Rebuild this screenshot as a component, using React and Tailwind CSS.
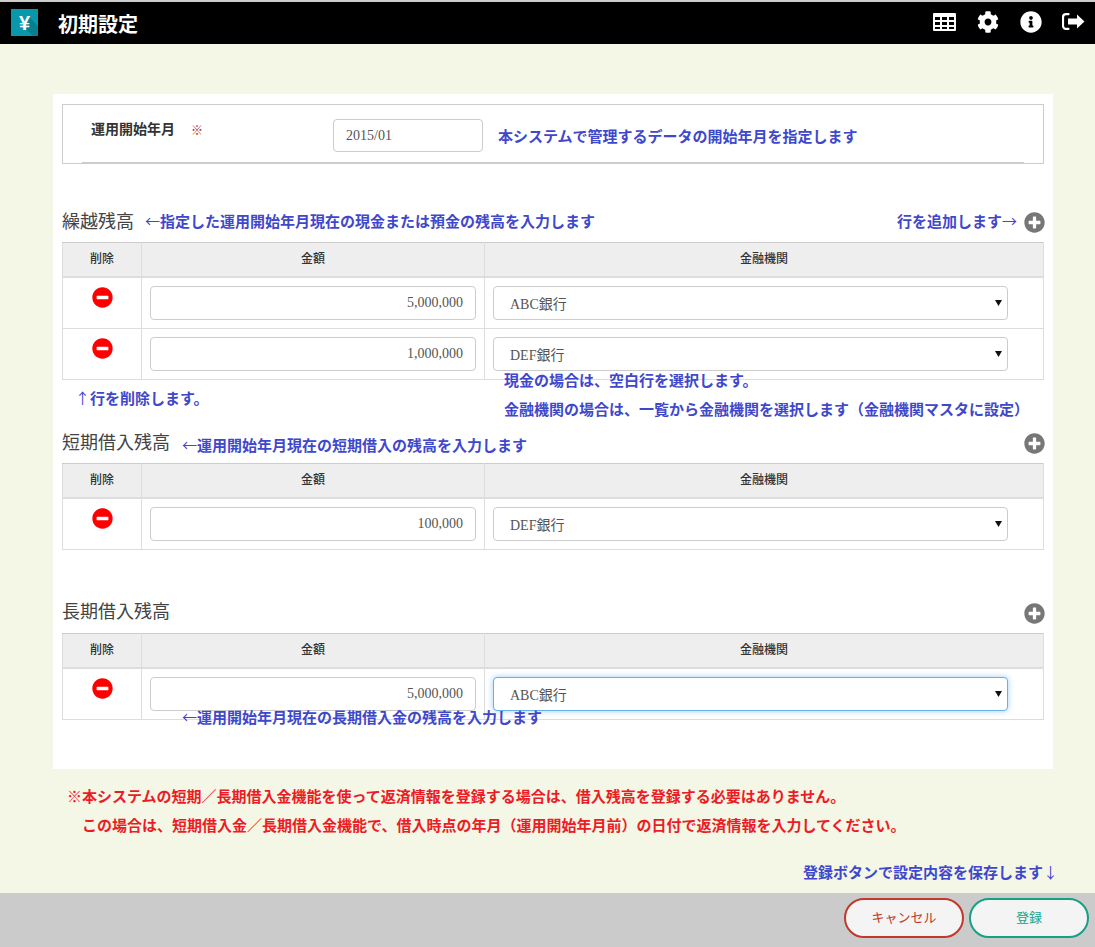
import React from "react";
import { FaCog, FaInfoCircle, FaMinusCircle, FaPlusCircle } from "react-icons/fa";

const Note = ({ className = "", children }) => (
  <span className={`text-[15px] leading-[20px] font-bold text-[#3f48cc] whitespace-nowrap font-['Noto_Sans_CJK_JP',sans-serif] ${className}`}>{children}</span>
);

const Arrow = ({ children }) => <span className="font-normal">{children}</span>;

const Row = ({ amount, bank, focus }) => (
  <tr className="h-[51px] first:h-[52px]">
    <td className="border border-[#dddddd] align-top pt-[9px]">
      <FaMinusCircle className="block mx-auto text-[#ff0000] text-[21px]" />
    </td>
    <td className="border border-[#dddddd] align-top pt-[8px] px-2">
      <input
        readOnly
        value={amount}
        className="w-full h-[34px] border border-[#cccccc] rounded-[4px] bg-white text-right pr-3 text-[14px] text-[#555555] font-['Liberation_Serif','Noto_Sans_CJK_JP',serif] outline-none"
      />
    </td>
    <td className="border border-[#dddddd] align-top pt-[8px] pl-2">
      <div className="relative w-[515px]">
        <select
          defaultValue={bank}
          className={`appearance-none w-full h-[34px] rounded-[4px] bg-white pl-4 pt-[3px] text-[14px] text-[#555555] font-['Liberation_Serif','Noto_Sans_CJK_JP',serif] outline-none border ${
            focus ? "border-[#66afe9] shadow-[0_0_6px_rgba(102,175,233,0.6)]" : "border-[#cccccc]"
          }`}
        >
          <option>{bank}</option>
        </select>
        <svg viewBox="0 0 8 8" className="absolute right-[6px] top-[13px] w-[7px] h-[7px]">
          <path d="M0 1h8L4 8z" fill="#111" />
        </svg>
      </div>
    </td>
  </tr>
);

const BalanceTable = ({ rows }) => (
  <table className="w-[981px] table-fixed border-collapse">
    <colgroup>
      <col className="w-[79px]" />
      <col className="w-[343px]" />
      <col className="w-[559px]" />
    </colgroup>
    <thead>
      <tr className="h-[34px] bg-[#eeeeee] text-[12px] font-medium text-[#333333]">
        <th className="border border-[#dddddd] border-t-[#cccccc] border-b-2 font-medium">削除</th>
        <th className="border border-[#dddddd] border-t-[#cccccc] border-b-2 font-medium">金額</th>
        <th className="border border-[#dddddd] border-t-[#cccccc] border-b-2 font-medium">金融機関</th>
      </tr>
    </thead>
    <tbody>
      {rows.map((r, i) => (
        <Row key={i} {...r} />
      ))}
    </tbody>
  </table>
);

const Heading = ({ className = "", children }) => (
  <span className={`text-[18px] leading-[24px] text-[#444444] font-normal whitespace-nowrap ${className}`}>{children}</span>
);

const Plus = () => <FaPlusCircle className="text-[#777777] text-[21px] shrink-0" />;

export default function App() {
  return (
    <div className="w-[1095px] h-[947px] flex flex-col overflow-hidden bg-[#f4f6e6] font-['Liberation_Sans','Noto_Sans_CJK_JP',sans-serif]">
      <header className="h-[44px] shrink-0 bg-black border-t-2 border-[#cccccc] flex items-center pl-[11px] pr-[10px]">
        <div className="relative w-[27px] h-[27px] bg-[#0897ab] flex items-center justify-center overflow-hidden -mt-[1px]">
          <svg viewBox="0 0 27 27" className="absolute inset-0 w-full h-full">
            <path d="M14 19 L22 27 L27 27 L27 17 L17 7 Z" fill="#067f90" />
          </svg>
          <span className="relative text-white text-[20px] font-bold leading-none">¥</span>
        </div>
        <h1 className="ml-[20px] mt-[3px] text-white text-[20px] leading-none font-bold">初期設定</h1>
        <div className="ml-auto flex items-center">
          <svg viewBox="0 0 23 18" className="w-[23px] h-[18px] mr-[21px] -mt-[2px]">
            <path
              fillRule="evenodd"
              fill="#fff"
              d="M1 0h21a1 1 0 0 1 1 1v16a1 1 0 0 1-1 1H1a1 1 0 0 1-1-1V1a1 1 0 0 1 1-1zM2 4v3h5V4zm7 0v3h5V4zm7 0v3h5V4zM2 9v3h5V9zm7 0v3h5V9zm7 0v3h5V9zM2 14v2h5v-2zm7 0v2h5v-2zm7 0v2h5v-2z"
            />
          </svg>
          <FaCog className="text-white text-[22px] mr-[21px] -mt-[2px]" />
          <FaInfoCircle className="text-white text-[22px] mr-[20px] -mt-[2px]" />
          <svg viewBox="0 0 23 17" className="w-[23px] h-[17px] -mt-[3px]">
            <path d="M6.5 1.2H4A3 3 0 0 0 1 4.2v8.6a3 3 0 0 0 3 3h2.5" fill="none" stroke="#fff" strokeWidth="2.2" strokeLinecap="round" />
            <path d="M6 5.5h9V1.5L22.5 8.5 15 15.5v-4H6z" fill="#fff" />
          </svg>
        </div>
      </header>

      <main className="mt-[50px] ml-[53px] w-[1000px] h-[675px] shrink-0 bg-white pt-[10px] pl-[9px]">
        <section className="relative w-[982px] h-[60px] border border-[#cccccc] border-b-0 flex items-start">
          <div className="absolute left-[19px] right-[19px] bottom-0 h-[2px] bg-[#cccccc]" />
          <div className="absolute left-0 right-0 bottom-0 h-px bg-[#cccccc]" />
          <span className="ml-[28px] mt-[14px] w-[100px] text-[14px] leading-[20px] font-bold text-[#333333] whitespace-nowrap">運用開始年月</span>
          <span className="mt-[17px] text-[12px] leading-[18px] text-[#b02a20]">※</span>
          <input
            readOnly
            value="2015/01"
            className="ml-[130px] mt-[14px] w-[150px] h-[33px] border border-[#cccccc] rounded-[4px] pl-3 text-[14px] text-[#555555] font-['Liberation_Serif',serif] outline-none"
          />
          <Note className="ml-[15px] mt-[21px]">本システムで管理するデータの開始年月を指定します</Note>
        </section>

        <div className="h-[45px] flex items-center w-[982px] pt-[7px] pb-[3px] mt-[33px]">
          <Heading>繰越残高</Heading>
          <Note className="ml-[11px] -mt-[2px]"><Arrow>←</Arrow>指定した運用開始年月現在の現金または預金の残高を入力します</Note>
          <Note className="ml-auto mr-[7px] -mt-[2px]">行を追加します<Arrow>→</Arrow></Note>
          <span className="-mr-[1px] mt-[2px]"><Plus /></span>
        </div>
        <BalanceTable
          rows={[
            { amount: "5,000,000", bank: "ABC銀行" },
            { amount: "1,000,000", bank: "DEF銀行" },
          ]}
        />

        <div className="relative h-[52px]">
          <Note className="absolute left-[13px] top-[8px]"><Arrow>↑</Arrow>行を削除します。</Note>
          <Note className="absolute left-[442px] -top-[10px]">現金の場合は、空白行を選択します。</Note>
          <Note className="absolute left-[442px] top-[19px]">金融機関の場合は、一覧から金融機関を選択します（金融機関マスタに設定）</Note>
        </div>

        <div className="h-[31px] flex items-start w-[982px]">
          <Heading className="-mt-px">短期借入残高</Heading>
          <Note className="ml-[12px] mt-[3px]"><Arrow>←</Arrow>運用開始年月現在の短期借入の残高を入力します</Note>
          <span className="ml-auto -mr-[1px] mt-px"><Plus /></span>
        </div>
        <BalanceTable rows={[{ amount: "100,000", bank: "DEF銀行" }]} />

        <div className="h-[50px]" />
        <div className="h-[33px] flex items-start w-[982px]">
          <Heading>長期借入残高</Heading>
          <span className="ml-auto -mr-[1px] mt-[3px]"><Plus /></span>
        </div>
        <div className="relative w-[982px]">
          <BalanceTable rows={[{ amount: "5,000,000", bank: "ABC銀行", focus: true }]} />
          <Note className="absolute left-[120px] top-[74px]"><Arrow>←</Arrow>運用開始年月現在の長期借入金の残高を入力します</Note>
        </div>
      </main>

      <div className="relative flex-1 font-['Noto_Sans_CJK_JP',sans-serif]">
        <p className="absolute left-[67px] top-[17px] text-[15px] leading-[20px] font-bold text-[#ed1c24] whitespace-nowrap">
          ※本システムの短期／長期借入金機能を使って返済情報を登録する場合は、借入残高を登録する必要はありません。
        </p>
        <p className="absolute left-[82px] top-[46px] text-[15px] leading-[20px] font-bold text-[#ed1c24] whitespace-nowrap">
          この場合は、短期借入金／長期借入金機能で、借入時点の年月（運用開始年月前）の日付で返済情報を入力してください。
        </p>
        <Note className="absolute right-[37px] top-[93px]">登録ボタンで設定内容を保存します<Arrow>↓</Arrow></Note>
      </div>

      <footer className="h-[54px] shrink-0 bg-[#cbcbcb] flex items-start justify-end gap-[5px] pt-[5px] pr-[6px]">
        <button className="w-[120px] h-[40px] rounded-[20px] border-[2px] border-[#c0392b] bg-[#f4f4f4] text-[13px] text-[#c0392b]">キャンセル</button>
        <button className="w-[120px] h-[40px] rounded-[20px] border-[2px] border-[#16a085] bg-[#f4f4f4] text-[13px] text-[#16a085]">登録</button>
      </footer>
    </div>
  );
}
